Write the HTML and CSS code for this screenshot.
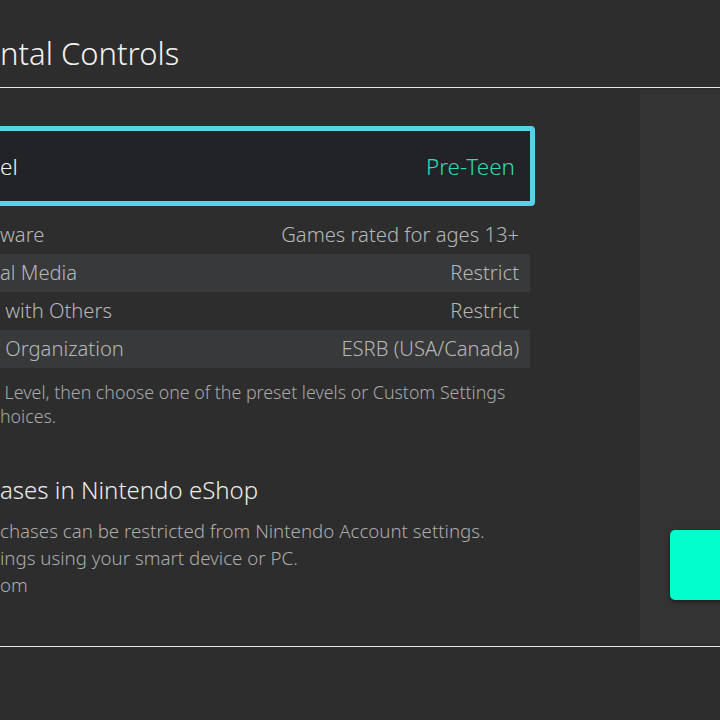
FILE: index.html
```html
<!DOCTYPE html>
<html>
<head>
<meta charset="utf-8">
<link rel="stylesheet" href="styles.css">
</head>
<body>
<div class="screen">
  <header class="header"><h1 class="title">ntal Controls</h1></header>
  <main class="main">
    <section class="content">
      <div class="level-box">
        <span class="level-label">el</span>
        <span class="level-value">Pre-Teen</span>
      </div>
      <div class="rows">
        <div class="row"><span>ware</span><span>Games rated for ages 13+</span></div>
        <div class="row shaded"><span>al Media</span><span>Restrict</span></div>
        <div class="row"><span>&nbsp;with Others</span><span>Restrict</span></div>
        <div class="row shaded"><span>&nbsp;Organization</span><span>ESRB (USA/Canada)</span></div>
      </div>
      <p class="desc">&nbsp;Level, then choose one of the preset levels or Custom Settings<br>hoices.</p>
      <h2 class="sub">ases in Nintendo eShop</h2>
      <p class="body">chases can be restricted from Nintendo Account settings.<br>ings using your smart device or PC.<br>om</p>
    </section>
    <aside class="panel"><div class="btn"></div></aside>
  </main>
  <footer class="footer"></footer>
</div>
</body>
</html>
```
FILE: styles.css
```css
html, body { margin: 0; padding: 0; }
body { background: #2d2d2d; font-family: "Noto Sans", "Open Sans", sans-serif; font-weight: 300; overflow: hidden; }
.screen { width: 720px; height: 720px; display: flex; flex-direction: column; overflow: hidden; }
.header { height: 87px; border-bottom: 1px solid #e6e6e6; box-sizing: content-box; display: flex; align-items: flex-end; }
.title { margin: 0 0 16px 0; font-weight: 300; font-size: 31px; color: #f2f2f2; line-height: 36px; }
.main { height: 558px; display: flex; justify-content: space-between; }
.content { width: 535px; padding-top: 38px; }
.level-box { margin-left: -20px; height: 70px; border: 5px solid #58d2e6; border-radius: 4px; background: #212327; display: flex; align-items: center; justify-content: space-between; padding: 0 15px 0 15px; }
.level-label { font-size: 22.5px; color: #f4f4f4; }
.level-value { font-size: 22.5px; color: #2cdcb6; }
.rows { margin-top: 10px; width: 530px; }
.row { height: 38px; display: flex; align-items: center; justify-content: space-between; padding: 0 11px 2px 0; font-size: 20.2px; color: #b7b7b7; box-sizing: border-box; white-space: pre; }
.row.shaded { background: #38393b; }
.desc { margin: 12px 0 0 0; font-size: 17.8px; line-height: 24px; color: #a9a9a9; }
.sub { margin: 47px 0 0 0; font-weight: 300; font-size: 24px; color: #ececec; line-height: 30px; }
.body { margin: 12px 0 0 0; font-size: 18.7px; line-height: 27px; color: #acacac; }
.panel { width: 80px; margin-top: 2px; margin-bottom: 2px; background: #333333; position: relative; }
.btn { position: absolute; left: 30px; top: 440px; width: 60px; height: 70px; background: #00ffcc; border-radius: 5px; box-shadow: 0 2px 4px rgba(0,0,0,0.45); }
.footer { flex: 1; border-top: 1px solid #e6e6e6; }
```
